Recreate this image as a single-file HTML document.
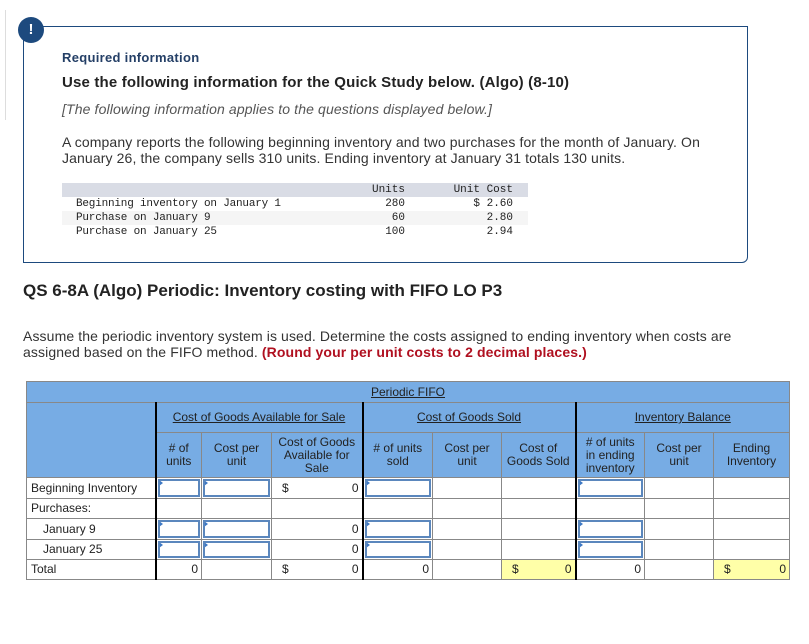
<!DOCTYPE html>
<html><head><meta charset="utf-8"><style>
body{margin:0;width:809px;height:644px;background:#fff;font-family:"Liberation Sans",sans-serif;position:relative;overflow:hidden;color:#222}
.a{position:absolute;white-space:nowrap}
.box{position:absolute;left:23px;top:26px;width:723px;height:235px;border:1.5px solid #1d4a7e;border-radius:0 0 6px 0}
.badge{position:absolute;left:18px;top:17px;width:26px;height:26px;border-radius:50%;background:#1d4a7e;color:#fff;font-weight:bold;font-size:15px;text-align:center;line-height:26px}
.mono{font-family:"Liberation Mono",monospace;font-size:11px;color:#222}
table.t{position:absolute;left:26px;top:381px;border-collapse:collapse;table-layout:fixed;font-size:12px}
table.t td{border:1px solid #888;padding:0;text-align:center;line-height:13px;overflow:hidden}
.h{background:#77ace4}
.u{text-decoration:underline}
.bl{border-left:2px solid #000!important}
.inp{position:relative}
.inp:after{content:"";position:absolute;left:1px;top:1px;right:1px;bottom:1px;border:2px solid #5b87bd}
.inp:before{content:"";position:absolute;left:2px;top:2px;border-left:4px solid #3d78c4;border-top:3px solid transparent;border-bottom:3px solid transparent}
.r{text-align:right!important;padding-right:3px!important}
.y{background:#ffffa8}
.lt{text-align:left!important;padding-left:4px!important}
.tot td{border-bottom:2px solid #000}
</style></head><body>
<div style="position:absolute;left:0;top:10px;width:5px;height:110px;border-right:1px solid #ddd"></div>
<div class="box"></div>
<div class="badge">!</div>
<div class="a" style="left:62px;top:50px;font-size:13px;font-weight:bold;color:#243f66;letter-spacing:0.3px">Required information</div>
<div class="a" style="left:62px;top:74px;font-size:15px;font-weight:bold;color:#222;letter-spacing:0.17px">Use the following information for the Quick Study below. (Algo) (8-10)</div>
<div class="a" style="left:62px;top:101px;font-size:14px;font-style:italic;color:#555;letter-spacing:0.13px">[The following information applies to the questions displayed below.]</div>
<div class="a" style="left:62px;top:134px;font-size:14px;line-height:16px;color:#333;letter-spacing:0.12px">A company reports the following beginning inventory and two purchases for the month of January. On<br>January 26, the company sells 310 units. Ending inventory at January 31 totals 130 units.</div>
<div style="position:absolute;left:62px;top:183px;width:466px;height:14px;background:#d9dce5"></div>
<div style="position:absolute;left:62px;top:211px;width:466px;height:14px;background:#f5f5f5"></div>
<div class="a mono" style="left:76px;top:197px;line-height:14px;letter-spacing:-0.2px">Beginning inventory on January 1<br>Purchase on January 9<br>Purchase on January 25</div>
<div class="a mono" style="left:340px;top:183px;width:65px;text-align:right;line-height:14px">Units<br>280<br>60<br>100</div>
<div class="a mono" style="left:440px;top:183px;width:73px;text-align:right;line-height:14px">Unit Cost<br>$ 2.60<br>2.80<br>2.94</div>
<div class="a" style="left:23px;top:281px;font-size:17px;font-weight:bold;color:#222">QS 6-8A (Algo) Periodic: Inventory costing with FIFO LO P3</div>
<div class="a" style="left:23px;top:328px;font-size:14px;line-height:16px;color:#333;letter-spacing:0.11px">Assume the periodic inventory system is used. Determine the costs assigned to ending inventory when costs are<br>assigned based on the FIFO method. <b style="color:#b01020">(Round your per unit costs to 2 decimal places.)</b></div>
<table class="t">
<colgroup><col style="width:129px"><col style="width:46px"><col style="width:70px"><col style="width:91px"><col style="width:70px"><col style="width:69px"><col style="width:74px"><col style="width:69px"><col style="width:69px"><col style="width:76px"></colgroup>
<tr style="height:21px"><td class="h" colspan="10"><span class="u">Periodic FIFO</span></td></tr>
<tr style="height:30px"><td class="h" rowspan="2"></td><td class="h bl" colspan="3"><span class="u">Cost of Goods Available for Sale</span></td><td class="h bl" colspan="3"><span class="u">Cost of Goods Sold</span></td><td class="h bl" colspan="3"><span class="u">Inventory Balance</span></td></tr>
<tr style="height:45px"><td class="h bl"># of<br>units</td><td class="h">Cost per<br>unit</td><td class="h">Cost of Goods<br>Available for<br>Sale</td><td class="h bl"># of units<br>sold</td><td class="h">Cost per<br>unit</td><td class="h">Cost of<br>Goods Sold</td><td class="h bl"># of units<br>in ending<br>inventory</td><td class="h">Cost per<br>unit</td><td class="h">Ending<br>Inventory</td></tr>
<tr style="height:21px"><td class="lt">Beginning Inventory</td><td class="bl inp"></td><td class="inp"></td><td class="r"><span style="float:left;padding-left:10px">$</span>0</td><td class="bl inp"></td><td></td><td></td><td class="bl inp"></td><td></td><td></td></tr>
<tr style="height:20px"><td class="lt">Purchases:</td><td class="bl"></td><td></td><td></td><td class="bl"></td><td></td><td></td><td class="bl"></td><td></td><td></td></tr>
<tr style="height:21px"><td class="lt" style="padding-left:16px!important">January 9</td><td class="bl inp"></td><td class="inp"></td><td class="r">0</td><td class="bl inp"></td><td></td><td></td><td class="bl inp"></td><td></td><td></td></tr>
<tr style="height:20px"><td class="lt" style="padding-left:16px!important">January 25</td><td class="bl inp"></td><td class="inp"></td><td class="r">0</td><td class="bl inp"></td><td></td><td></td><td class="bl inp"></td><td></td><td></td></tr>
<tr class="tot" style="height:20px"><td class="lt" style="border-bottom:1px solid #888">Total</td><td class="bl r">0</td><td></td><td class="r"><span style="float:left;padding-left:10px">$</span>0</td><td class="bl r">0</td><td></td><td class="r y"><span style="float:left;padding-left:10px">$</span>0</td><td class="bl r">0</td><td></td><td class="r y"><span style="float:left;padding-left:10px">$</span>0</td></tr>
</table>
</body></html>
